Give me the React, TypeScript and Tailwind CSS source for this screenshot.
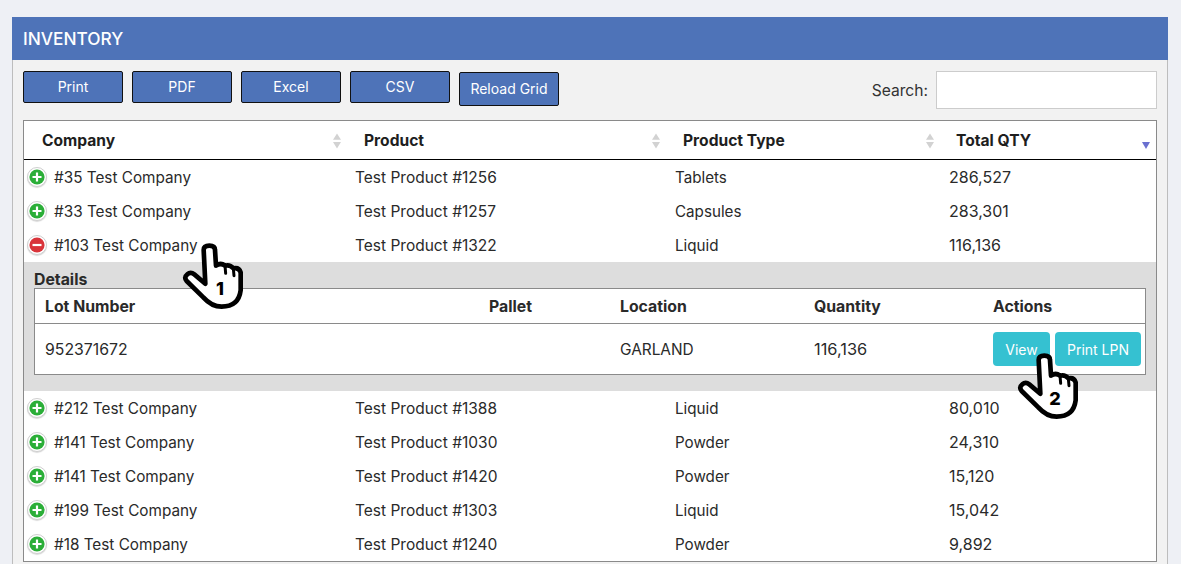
const rows1 = [
  ["#35 Test Company", "Test Product #1256", "Tablets", "286,527"],
  ["#33 Test Company", "Test Product #1257", "Capsules", "283,301"],
];
const rows2 = [
  ["#212 Test Company", "Test Product #1388", "Liquid", "80,010"],
  ["#141 Test Company", "Test Product #1030", "Powder", "24,310"],
  ["#141 Test Company", "Test Product #1420", "Powder", "15,120"],
  ["#199 Test Company", "Test Product #1303", "Liquid", "15,042"],
  ["#18 Test Company", "Test Product #1240", "Powder", "9,892"],
];

function Toggle({ open }: { open?: boolean }) {
  return (
    <span className="flex h-[20px] w-[20px] shrink-0 items-center justify-center rounded-full border border-[#cfcfcf] bg-white shadow-[0_1px_1px_rgba(0,0,0,0.15)]">
      <svg width="16" height="16" viewBox="0 0 16 16">
        <circle cx="8" cy="8" r="7.6" fill={open ? "#d9343a" : "#2bae38"} />
        <path d={open ? "M3.5 8h9" : "M3.5 8h9M8 3.5v9"} stroke="#fff" strokeWidth="2.2" fill="none" />
      </svg>
    </span>
  );
}

function Row({ r, open }: { r: string[]; open?: boolean }) {
  return (
    <div className="grid h-[34px] grid-cols-[324px_319px_274px_215px] items-center bg-white text-[#2a2a2a]">
      <div className="flex items-center gap-[7px] pl-[3px] text-[15.3px]">
        <Toggle open={open} />
        <span className="pt-[2px]">{r[0]}</span>
      </div>
      <div className="pt-[1px] pl-[7px] text-[15.5px]">{r[1]}</div>
      <div className="pt-[2px] pl-[8px] text-[15.2px]">{r[2]}</div>
      <div className="pl-[8px] text-[16px]">{r[3]}</div>
    </div>
  );
}

function Sort({ active }: { active?: boolean }) {
  if (active) {
    return (
      <svg width="10" height="9" viewBox="0 0 10 9" className="absolute right-[5px] top-[20px]">
        <path d="M1 1h8L5 8z" fill="#6a70d0" />
      </svg>
    );
  }
  return (
    <svg width="10" height="16" viewBox="0 0 10 16" className="absolute right-[6px] top-[12px]">
      <path d="M5 0.5L9 6.8H1z M1 9h8L5 15.5z" fill="#d2d2d2" />
    </svg>
  );
}

function Head({ label, pad, active }: { label: string; pad: string; active?: boolean }) {
  return (
    <div className={`relative flex h-full items-center pt-[1px] font-bold ${pad}`}>
      {label}
      <Sort active={active} />
    </div>
  );
}

function Hand({ n, cls }: { n: string; cls: string }) {
  return (
    <div className={`absolute h-[80px] w-[90px] ${cls}`}>
      <svg width="90" height="80" viewBox="0 0 270 240" className="absolute left-0 top-0">
        <path
          d="M101 45Q101 32 118 32Q135 32 135 45L138 92Q152 82 165 92Q180 88 190 100Q207 96 212 112L212 166Q206 215 155 215Q125 215 100 187L50 138Q41 127 52 118Q62 109 73 118L106 146Z"
          fill="#fff"
          stroke="#000"
          strokeWidth="14"
          strokeLinejoin="round"
        />
        <path d="M165 92L167 115M190 100L192 122" stroke="#000" strokeWidth="9" strokeLinecap="round" fill="none" />
      </svg>
      <span className="absolute left-[37px] top-[42px] w-[26px] text-center text-[18px] leading-[24px] font-extrabold text-black">{n}</span>
    </div>
  );
}

function Btn({ label }: { label: string }) {
  return (
    <button className="h-[32px] w-[100px] rounded-[2px] border border-[#111] bg-[#4e73b8] pb-[1px] text-[14px] text-white">
      {label}
    </button>
  );
}

export default function App() {
  return (
    <div className="relative h-[564px] overflow-hidden bg-[#eef0f5] pt-[17px] pr-[13px] pl-[12px] font-['Inter','Liberation_Sans',sans-serif]">
      <div className="flex h-[43px] items-center bg-[#4e73b8] pt-[1px] pl-[11px] text-[17.3px] font-medium text-white">INVENTORY</div>
      <div className="h-[600px] border border-t-0 border-[#bdbdbd] bg-[#f2f2f2] px-[10px]">
        <div className="flex h-[60px] items-start justify-between pt-[11px]">
          <div className="flex items-start gap-[9px]">
            <Btn label="Print" />
            <Btn label="PDF" />
            <Btn label="Excel" />
            <Btn label="CSV" />
            <button className="mt-[1px] h-[34px] w-[100px] rounded-[2px] border border-[#111] bg-[#4e73b8] pb-[1px] text-[14px] text-white">
              Reload Grid
            </button>
          </div>
          <div className="flex items-center gap-[8px]">
            <span className="pt-[1px] text-[15.6px] text-[#333]">Search:</span>
            <div className="h-[38px] w-[221px] border border-[#ccc] bg-white" />
          </div>
        </div>
        <div className="w-[1134px] border border-[#8a8a8a] bg-white">
          <div className="grid h-[39px] grid-cols-[324px_319px_274px_215px] border-b border-black text-[15.6px] text-[#1e1e1e]">
            <Head label="Company" pad="pl-[18px]" />
            <Head label="Product" pad="pl-[16px]" />
            <Head label="Product Type" pad="pl-[16px]" />
            <Head label="Total QTY" pad="pl-[15px]" active />
          </div>
          {rows1.map((r, i) => (
            <Row key={i} r={r} />
          ))}
          <Row r={["#103 Test Company", "Test Product #1322", "Liquid", "116,136"]} open />
          <div className="h-[129px] bg-[#dddddd] px-[10px] pt-[9px]">
            <div className="h-[17px] text-[15.8px] leading-[17px] font-bold text-[#2a2a2a]">Details</div>
            <div className="border border-[#8a8a8a] bg-white text-[#2a2a2a]">
              <div className="grid h-[35px] grid-cols-[454px_131px_194px_179px_1fr] items-center border-b border-[#8a8a8a] pt-[1px] text-[15.8px] font-bold">
                <div className="pl-[10px]">Lot Number</div>
                <div>Pallet</div>
                <div>Location</div>
                <div>Quantity</div>
                <div>Actions</div>
              </div>
              <div className="grid h-[50px] grid-cols-[454px_131px_194px_179px_1fr] items-center">
                <div className="pt-[2px] pl-[10px] text-[15.8px]">952371672</div>
                <div />
                <div className="pt-[2px] text-[15.4px]">GARLAND</div>
                <div className="text-[16.4px]">116,136</div>
                <div className="flex gap-[5px]">
                  <button className="h-[34px] w-[57px] rounded-[4px] bg-[#35c1d1] text-[14px] text-white">View</button>
                  <button className="h-[34px] w-[86px] rounded-[4px] bg-[#35c1d1] text-[14px] text-white">Print LPN</button>
                </div>
              </div>
            </div>
          </div>
          {rows2.map((r, i) => (
            <Row key={i} r={r} />
          ))}
        </div>
      </div>
      <Hand n="1" cls="left-[170px] top-[235px]" />
      <Hand n="2" cls="left-[1005px] top-[345px]" />
    </div>
  );
}
